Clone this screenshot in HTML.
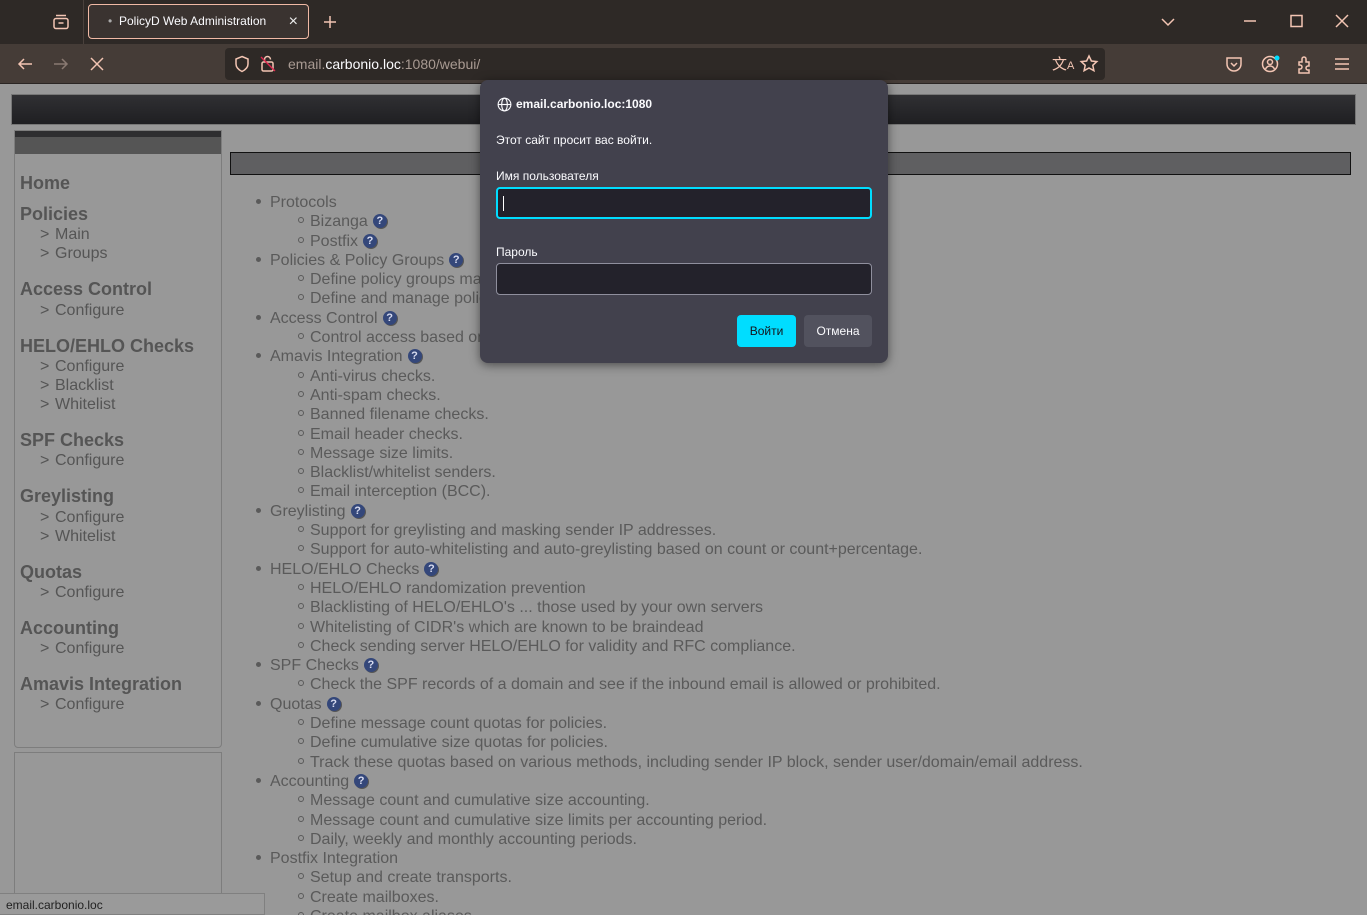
<!DOCTYPE html>
<html style="width:1367px;height:915px;overflow:hidden"><head><meta charset="utf-8"><style>
*{margin:0;padding:0;box-sizing:border-box}
body{width:1367px;height:915px;overflow:hidden;background:#989898;font-family:"Liberation Sans",Arial,sans-serif;position:relative}
.a{position:absolute}
#tabs{left:0;top:0;width:1367px;height:44px;background:#2e2926}
#tool{left:0;top:44px;width:1367px;height:40px;background:#453c37;border-bottom:1px solid #2a2523}
.ic{stroke:#f3c5b3;fill:none;stroke-width:1.5}
.side{color:#555;font-size:16px;white-space:nowrap}
.side i{font-style:normal;display:inline-block;width:15px}
.side b{font-size:18px;color:#555}
.ln{color:#5a5a5a;font-size:16px;white-space:nowrap;line-height:19.3px;height:19.3px}
.q{display:inline-block;width:14px;height:14px;border-radius:50%;background:#34477a;color:#d8dcf0;font-size:11px;font-weight:bold;text-align:center;line-height:14px;vertical-align:2px;margin-left:5px;box-shadow:1px 1px 0 #555}
.dot{display:inline-block;width:5px;height:5px;border-radius:50%;background:#5a5a5a;margin-right:9px;vertical-align:3px}
.circ{display:inline-block;width:6px;height:6px;border-radius:50%;border:1px solid #5a5a5a;margin-right:6px;vertical-align:3px}
.s{padding-left:42px}
#list{left:256px;top:193px;height:722px;overflow:hidden}
#dlg{left:480px;top:80px;width:408px;height:283px;background:#42414d;border-radius:8px;box-shadow:0 2px 10px rgba(0,0,0,.5);color:#fbfbfe;font-size:12px}
.inp{position:absolute;left:16px;width:376px;height:32px;background:#23222b;border:1px solid #8f8f9d;border-radius:4px}
</style></head><body>
<div class="a" id="tabs">
 <svg class="a" style="left:52px;top:13px" width="18" height="18" viewBox="0 0 18 18"><rect class="ic" x="2" y="5.5" width="14" height="10" rx="2"/><path class="ic" d="M4 2.5h10M6.5 10h5"/></svg>
 <div class="a" style="left:83px;top:0;width:1px;height:44px;background:#4a413c"></div>
 <div class="a" style="left:88px;top:4px;width:221px;height:35px;border:1px solid #f0b9a5;border-radius:4px;background:#3a3330;color:#fbfbfe;font-size:12px;line-height:33px;padding-left:30px">PolicyD Web Administration<span class="a" style="left:19px;top:0;color:#aaa">•</span><span class="a" style="right:10px;top:0;font-size:16px;color:#eee">×</span></div>
 <svg class="a" style="left:322px;top:14px" width="16" height="16"><path class="ic" d="M8 2v12M2 8h12"/></svg>
 <svg class="a" style="left:1160px;top:16px" width="16" height="12"><path class="ic" d="M2 3l6 6 6-6"/></svg>
 <svg class="a" style="left:1243px;top:14px" width="14" height="14"><path class="ic" d="M1 7h12"/></svg>
 <svg class="a" style="left:1290px;top:14px" width="14" height="14"><rect class="ic" x="1" y="1.5" width="11" height="11"/></svg>
 <svg class="a" style="left:1335px;top:14px" width="14" height="14"><path class="ic" d="M1 1l12 12M13 1L1 13"/></svg>
</div>
<div class="a" id="tool">
 <svg class="a" style="left:16px;top:11px" width="18" height="18"><path class="ic" d="M16 9H3M8 4L3 9l5 5"/></svg>
 <svg class="a" style="left:52px;top:11px" width="18" height="18"><path class="ic" style="stroke:#8a7a72" d="M2 9h13M10 4l5 5-5 5"/></svg>
 <svg class="a" style="left:89px;top:12px" width="16" height="16"><path class="ic" d="M2 2l12 12M14 2L2 14"/></svg>
 <div class="a" style="left:225px;top:4px;width:880px;height:32px;background:#2e2926;border-radius:4px"></div>
 <svg class="a" style="left:233px;top:11px" width="18" height="18"><path class="ic" d="M9 1.5l6 2.5v5c0 3.5-3 6-6 7.5C6 15 3 12.5 3 9V4z"/></svg>
 <svg class="a" style="left:260px;top:10px" width="16" height="20"><rect class="ic" x="2" y="8" width="11" height="9" rx="1.5"/><path class="ic" d="M4.5 8V5.5a3 3 0 016 0"/><path d="M1 3l14 14" stroke="#e22850" stroke-width="1.3"/></svg>
 <div class="a" style="left:288px;top:4px;line-height:32px;font-size:14px;color:#a89a92">email.<span style="color:#fbfbfe">carbonio.loc</span>:1080/webui/</div>
 <div class="a" style="left:1052px;top:9px;color:#f3c5b3;font-size:15px">文<span style="font-size:11px">A</span></div>
 <svg class="a" style="left:1079px;top:10px" width="20" height="20"><path class="ic" d="M10 2l2.4 5 5.4.6-4 3.7 1.1 5.4L10 14l-4.9 2.7 1.1-5.4-4-3.7 5.4-.6z"/></svg>
 <svg class="a" style="left:1225px;top:11px" width="18" height="18"><path class="ic" d="M2 3h14v6a7 7 0 01-14 0z"/><path class="ic" d="M6 8l3 3 3-3"/></svg>
 <svg class="a" style="left:1261px;top:10px" width="20" height="20"><circle class="ic" cx="9" cy="10" r="7.5"/><circle class="ic" cx="9" cy="8" r="2.5"/><path class="ic" d="M4.5 15c1-2 2.5-3 4.5-3s3.5 1 4.5 3"/><circle cx="16" cy="4" r="2.5" fill="#0df"/></svg>
 <svg class="a" style="left:1297px;top:10px" width="18" height="20"><path class="ic" d="M2 8h3V5a2 2 0 014 0v3h3v4h-1a2 2 0 000 4h1v3H2v-4h1a2 2 0 000-4H2z"/></svg>
 <svg class="a" style="left:1334px;top:12px" width="16" height="16"><path class="ic" d="M1 3h14M1 8h14M1 13h14"/></svg>
</div>
<div class="a" style="left:11px;top:94px;width:1345px;height:31px;background:linear-gradient(#303033,#1f1f22);border:1px solid #777"></div>
<div class="a" style="left:14px;top:130px;width:208px;height:618px;border:1px solid #7d7d7d;border-radius:0 0 4px 4px"></div>
<div class="a" style="left:15px;top:131px;width:206px;height:23px;background:linear-gradient(#2e2e30 0 6px,#555 6px)"></div>
<div class="a" style="left:14px;top:752px;width:208px;height:163px;border:1px solid #7d7d7d;border-bottom:0"></div>
<div class="a" style="left:230px;top:152px;width:1121px;height:23px;background:#5f5f61;border:1px solid #111"></div>
<div class="a side" style="left:20px;top:173px"><b>Home</b></div>
<div class="a side" style="left:20px;top:204px"><b>Policies</b></div>
<div class="a side" style="left:40px;top:226px"><i>&gt;</i>Main</div>
<div class="a side" style="left:40px;top:245px"><i>&gt;</i>Groups</div>
<div class="a side" style="left:20px;top:279px"><b>Access Control</b></div>
<div class="a side" style="left:40px;top:302px"><i>&gt;</i>Configure</div>
<div class="a side" style="left:20px;top:336px"><b>HELO/EHLO Checks</b></div>
<div class="a side" style="left:40px;top:358px"><i>&gt;</i>Configure</div>
<div class="a side" style="left:40px;top:377px"><i>&gt;</i>Blacklist</div>
<div class="a side" style="left:40px;top:396px"><i>&gt;</i>Whitelist</div>
<div class="a side" style="left:20px;top:430px"><b>SPF Checks</b></div>
<div class="a side" style="left:40px;top:452px"><i>&gt;</i>Configure</div>
<div class="a side" style="left:20px;top:486px"><b>Greylisting</b></div>
<div class="a side" style="left:40px;top:509px"><i>&gt;</i>Configure</div>
<div class="a side" style="left:40px;top:528px"><i>&gt;</i>Whitelist</div>
<div class="a side" style="left:20px;top:562px"><b>Quotas</b></div>
<div class="a side" style="left:40px;top:584px"><i>&gt;</i>Configure</div>
<div class="a side" style="left:20px;top:618px"><b>Accounting</b></div>
<div class="a side" style="left:40px;top:640px"><i>&gt;</i>Configure</div>
<div class="a side" style="left:20px;top:674px"><b>Amavis Integration</b></div>
<div class="a side" style="left:40px;top:696px"><i>&gt;</i>Configure</div>
<div class="a" id="list">
<div class="ln"><span class="dot"></span>Protocols</div>
<div class="ln s"><span class="circ"></span>Bizanga<span class="q">?</span></div>
<div class="ln s"><span class="circ"></span>Postfix<span class="q">?</span></div>
<div class="ln"><span class="dot"></span>Policies &amp; Policy Groups<span class="q">?</span></div>
<div class="ln s"><span class="circ"></span>Define policy groups made up of combinations of users</div>
<div class="ln s"><span class="circ"></span>Define and manage policies</div>
<div class="ln"><span class="dot"></span>Access Control<span class="q">?</span></div>
<div class="ln s"><span class="circ"></span>Control access based on policy</div>
<div class="ln"><span class="dot"></span>Amavis Integration<span class="q">?</span></div>
<div class="ln s"><span class="circ"></span>Anti-virus checks.</div>
<div class="ln s"><span class="circ"></span>Anti-spam checks.</div>
<div class="ln s"><span class="circ"></span>Banned filename checks.</div>
<div class="ln s"><span class="circ"></span>Email header checks.</div>
<div class="ln s"><span class="circ"></span>Message size limits.</div>
<div class="ln s"><span class="circ"></span>Blacklist/whitelist senders.</div>
<div class="ln s"><span class="circ"></span>Email interception (BCC).</div>
<div class="ln"><span class="dot"></span>Greylisting<span class="q">?</span></div>
<div class="ln s"><span class="circ"></span>Support for greylisting and masking sender IP addresses.</div>
<div class="ln s"><span class="circ"></span>Support for auto-whitelisting and auto-greylisting based on count or count+percentage.</div>
<div class="ln"><span class="dot"></span>HELO/EHLO Checks<span class="q">?</span></div>
<div class="ln s"><span class="circ"></span>HELO/EHLO randomization prevention</div>
<div class="ln s"><span class="circ"></span>Blacklisting of HELO/EHLO's ... those used by your own servers</div>
<div class="ln s"><span class="circ"></span>Whitelisting of CIDR's which are known to be braindead</div>
<div class="ln s"><span class="circ"></span>Check sending server HELO/EHLO for validity and RFC compliance.</div>
<div class="ln"><span class="dot"></span>SPF Checks<span class="q">?</span></div>
<div class="ln s"><span class="circ"></span>Check the SPF records of a domain and see if the inbound email is allowed or prohibited.</div>
<div class="ln"><span class="dot"></span>Quotas<span class="q">?</span></div>
<div class="ln s"><span class="circ"></span>Define message count quotas for policies.</div>
<div class="ln s"><span class="circ"></span>Define cumulative size quotas for policies.</div>
<div class="ln s"><span class="circ"></span>Track these quotas based on various methods, including sender IP block, sender user/domain/email address.</div>
<div class="ln"><span class="dot"></span>Accounting<span class="q">?</span></div>
<div class="ln s"><span class="circ"></span>Message count and cumulative size accounting.</div>
<div class="ln s"><span class="circ"></span>Message count and cumulative size limits per accounting period.</div>
<div class="ln s"><span class="circ"></span>Daily, weekly and monthly accounting periods.</div>
<div class="ln"><span class="dot"></span>Postfix Integration</div>
<div class="ln s"><span class="circ"></span>Setup and create transports.</div>
<div class="ln s"><span class="circ"></span>Create mailboxes.</div>
<div class="ln s"><span class="circ"></span>Create mailbox aliases.</div>
</div>
<div class="a" style="left:0;top:893px;width:265px;height:22px;background:#9a9a9a;border:1px solid #808080;border-left:0;color:#222;font-size:12px;line-height:22px;padding-left:6px">email.carbonio.loc</div>
<div class="a" id="dlg">
 <svg class="a" style="left:17px;top:17px" width="15" height="15" viewBox="0 0 16 16"><g fill="none" stroke="#fbfbfe" stroke-width="1.2"><circle cx="8" cy="8" r="6.8"/><ellipse cx="8" cy="8" rx="3" ry="6.8"/><path d="M1.2 8h13.6"/></g></svg>
 <div class="a" style="left:36px;top:17px;font-weight:bold;font-size:12px">email.carbonio.loc:1080</div>
 <div class="a" style="left:16px;top:53px">Этот сайт просит вас войти.</div>
 <div class="a" style="left:16px;top:89px">Имя пользователя</div>
 <div class="inp" style="top:107px;border:2px solid #00ddff"><div class="a" style="left:5px;top:7px;width:1px;height:15px;background:#fff"></div></div>
 <div class="a" style="left:16px;top:165px">Пароль</div>
 <div class="inp" style="top:183px"></div>
 <div class="a" style="left:257px;top:235px;width:59px;height:32px;background:#00ddff;border-radius:4px;color:#15141a;text-align:center;line-height:32px">Войти</div>
 <div class="a" style="left:324px;top:235px;width:68px;height:32px;background:#52525e;border-radius:4px;text-align:center;line-height:32px">Отмена</div>
</div>
</body></html>
